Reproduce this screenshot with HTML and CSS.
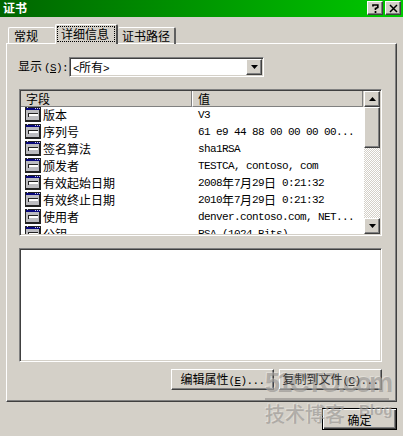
FILE: index.html
```html
<!DOCTYPE html>
<html lang="zh-CN">
<head>
<meta charset="utf-8">
<title>证书</title>
<link rel="stylesheet" href="styles.css">
</head>
<body>
<svg width="0" height="0" class="defs">
  <symbol id="field" viewBox="0 0 16 15">
    <path fill="#222" d="M0 0h16v15H0z"/>
    <path fill="#bcbcc0" d="M1 3h13v10H1z"/>
    <path fill="#08087c" d="M1 1h14v2H1z"/>
    <path fill="#d0d0e8" d="M2 0h1v1H2zM10 1h1v1h-1zM12 1h1v1h-1zM14 1h1v1h-1z"/>
    <path fill="#222" d="M3 6h10v1H4v3H3z"/>
    <path fill="#fff" d="M4 7h9v2H4z"/>
  </symbol>
</svg>
<div class="dialog">
  <header class="titlebar">
    <h1>证书</h1>
    <button class="cap"><svg width="9" height="9" viewBox="0 0 9 9"><path d="M2 2.5V1h4.800v2.500L4.500 4.500V6M4.500 7v2" fill="none" stroke="#000" stroke-width="1.7"/></svg></button>
    <button class="cap"><svg width="9" height="9" viewBox="0 0 9 9"><path d="M1 1l7 7M8 1L1 8" stroke="#000" stroke-width="1.5"/></svg></button>
  </header>
  <nav class="tabs">
    <div class="tab first">常规</div>
    <div class="tab active"><span>详细信息</span></div>
    <div class="tab last">证书路径</div>
  </nav>
  <main class="panel">
    <div class="show">
      <label>显示<span class="m">(<u>S</u>):</span></label>
      <div class="combo"><span><b class="m">&lt;</b>所有<b class="m">&gt;</b></span><i class="sbtn"><svg width="7" height="4"><path d="M0 0h7L3.500 4z"/></svg></i></div>
    </div>
    <section class="list">
      <div class="table">
        <div class="row head"><div>字段</div><div>值</div></div>
        <div class="row"><div><svg class="ico"><use href="#field"/></svg>版本</div><div><span class="m">V3</span></div></div>
        <div class="row"><div><svg class="ico"><use href="#field"/></svg>序列号</div><div><span class="m">61 e9 44 88 00 00 00 00...</span></div></div>
        <div class="row"><div><svg class="ico"><use href="#field"/></svg>签名算法</div><div><span class="m">sha1RSA</span></div></div>
        <div class="row"><div><svg class="ico"><use href="#field"/></svg>颁发者</div><div><span class="m">TESTCA, contoso, com</span></div></div>
        <div class="row"><div><svg class="ico"><use href="#field"/></svg>有效起始日期</div><div><span class="m">2008</span>年<span class="m">7</span>月<span class="m">29</span>日<span class="m"> 0:21:32</span></div></div>
        <div class="row"><div><svg class="ico"><use href="#field"/></svg>有效终止日期</div><div><span class="m">2010</span>年<span class="m">7</span>月<span class="m">29</span>日<span class="m"> 0:21:32</span></div></div>
        <div class="row"><div><svg class="ico"><use href="#field"/></svg>使用者</div><div><span class="m">denver.contoso.com, NET...</span></div></div>
        <div class="row"><div><svg class="ico"><use href="#field"/></svg>公钥</div><div><span class="m">RSA (1024 Bits)</span></div></div>
      </div>
      <div class="scroll">
        <i class="sbtn"><svg width="7" height="4"><path d="M0 4h7L3.500 0z"/></svg></i>
        <i class="thumb"></i>
        <i class="sbtn down"><svg width="7" height="4"><path d="M0 0h7L3.500 4z"/></svg></i>
      </div>
    </section>
    <div class="detail"></div>
    <div class="actions">
      <button class="btn edit">编辑属性<span class="m">(<u>E</u>)...</span></button>
      <button class="btn copy"><span class="over">复制到文件<span class="m">(<u>C</u>)...</span></span></button>
    </div>
  </main>
  <footer><button class="btn ok"><span class="over">确定</span></button></footer>
  <div class="mark"><div class="site">51CTO.com</div><div class="sub"><span>技术博客</span><em>Blog</em></div></div>
</div>
</body>
</html>
```

FILE: styles.css
```css
* { box-sizing: border-box; }
body { margin: 0; background: #d4d0c8; }
.defs { position: absolute; }
.dialog {
  position: relative;
  width: 403px;
  height: 436px;
  overflow: hidden;
  background: #d4d0c8;
  color: #000;
  font: 12px/16px "Noto Sans CJK SC", sans-serif;
  white-space: nowrap;
}
.m {
  font-family: "Liberation Mono", monospace;
  font-size: 11px;
  font-weight: 400;
  letter-spacing: -0.6px;
  white-space: pre;
}
.titlebar {
  display: flex;
  height: 17px;
  padding: 1px 2px 0 3px;
  gap: 2px;
  background: linear-gradient(90deg, #006500, #00c900);
}
h1 { flex: 1; margin: 0; color: #fff; font-size: 12px; line-height: 14px; font-weight: 700; }
.cap {
  width: 16px;
  height: 14px;
  padding: 0;
  display: flex;
  align-items: center;
  justify-content: center;
  background: #d4d0c8;
  border: 1px solid;
  border-color: #fff #404040 #404040 #fff;
  box-shadow: inset -1px -1px #808080;
}
.tabs { display: flex; align-items: flex-end; height: 27px; padding-left: 8px; margin-bottom: -1px; position: relative; }
.tab { height: 17px; line-height: 16px; border-top: 1px solid #fff; border-radius: 2px 2px 0 0; }
.first { width: 47px; padding-left: 5px; border-left: 1px solid #fff; }
.active {
  width: 63px;
  height: 20px;
  padding: 1px;
  background: #d4d0c8;
  border-left: 1px solid #fff;
  border-right: 2px solid #505050;
}
.active span { display: block; height: 16px; line-height: 13px; padding-left: 3px; border: 1px dotted #000; }
.last { width: 58px; padding-left: 4px; border-right: 2px solid #606060; }
.panel {
  width: 391px;
  height: 359px;
  margin-left: 6px;
  padding: 13px 0 0 12px;
  border: 1px solid;
  border-color: #fff #404040 #404040 #fff;
  box-shadow: inset -1px -1px #808080;
}
.show { display: flex; height: 20px; }
.show label { width: 51px; line-height: 17px; margin-left: -1px; }
.show label .m { margin-left: 2px; }
.combo, .list, .detail {
  background: #fff;
  border: 1px solid;
  border-color: #808080 #fff #fff #808080;
  box-shadow: inset 1px 1px #404040, inset -1px -1px #d4d0c8;
}
.combo { display: flex; justify-content: space-between; width: 195px; padding: 1px; }
.combo span { padding-left: 2px; line-height: 15px; }
.sbtn, .thumb {
  width: 16px;
  height: 16px;
  display: flex;
  align-items: center;
  justify-content: center;
  background: #d4d0c8;
  border: 1px solid;
  border-color: #fff #404040 #404040 #fff;
  box-shadow: inset -1px -1px #808080;
}
.list { display: flex; justify-content: space-between; width: 363px; height: 147px; margin-top: 12px; padding: 1px; }
.table { width: 343px; height: 143px; overflow: hidden; }
.row { display: grid; grid-template-columns: 171px 171px; height: 17px; line-height: 15px; }
.row > div { display: flex; padding-left: 6px; }
.row > div:first-child { padding-left: 4px; }
.row .m { line-height: 16px; }
.row.head { height: 16px; line-height: 15px; background: #d4d0c8; }
.row.head > div { border-right: 1px solid #808080; border-bottom: 1px solid #808080; border-left: 1px solid #fff; }
.row.head > div:first-child { border-left: 0; padding-left: 5px; }
.row.head > div:last-child { padding-left: 5px; }
.ico { width: 16px; height: 15px; margin-right: 2px; }
.scroll {
  display: flex;
  flex-direction: column;
  width: 16px;
  background: repeating-conic-gradient(#fff 0 25%, #d4d0c8 0 50%) 0 0 / 2px 2px;
}
.thumb { height: 41px; }
.down { margin-top: auto; }
.detail { width: 363px; height: 114px; margin-top: 12px; }
.actions { display: flex; gap: 5px; margin: 7px 0 0 152px; }
.btn {
  height: 21px;
  padding: 0;
  color: #000;
  background: #d4d0c8;
  font: 12px/17px "Noto Sans CJK SC", sans-serif;
  white-space: nowrap;
  border: 1px solid;
  border-color: #fff #404040 #404040 #fff;
  box-shadow: inset -1px -1px #808080;
}
.edit { width: 103px; }
.copy { width: 103px; color: #333; }
.over { position: relative; z-index: 2; }
footer { display: flex; justify-content: flex-end; padding: 6px 6px 0 0; }
.ok { width: 75px; height: 22px; border-color: #000; box-shadow: inset 1px 1px #fff, inset -1px -1px #404040, inset -2px -2px #808080; }
.mark {
  position: absolute;
  z-index: 1;
  left: 265px;
  top: 369px;
  width: 124px;
  color: rgba(150, 147, 143, 0.65);
  text-shadow: -1px -1px rgba(255, 255, 255, 0.3);
  pointer-events: none;
}
.site { height: 31px; font: 700 27px/29px "Liberation Sans", sans-serif; letter-spacing: -2.7px; border-bottom: 2px solid rgba(145, 142, 138, 0.6); }
.sub { display: flex; font-size: 20px; line-height: 28px; font-weight: 500; }
.sub em { margin-left: 14px; font: 700 15px/20px "Liberation Sans", sans-serif; }
```
